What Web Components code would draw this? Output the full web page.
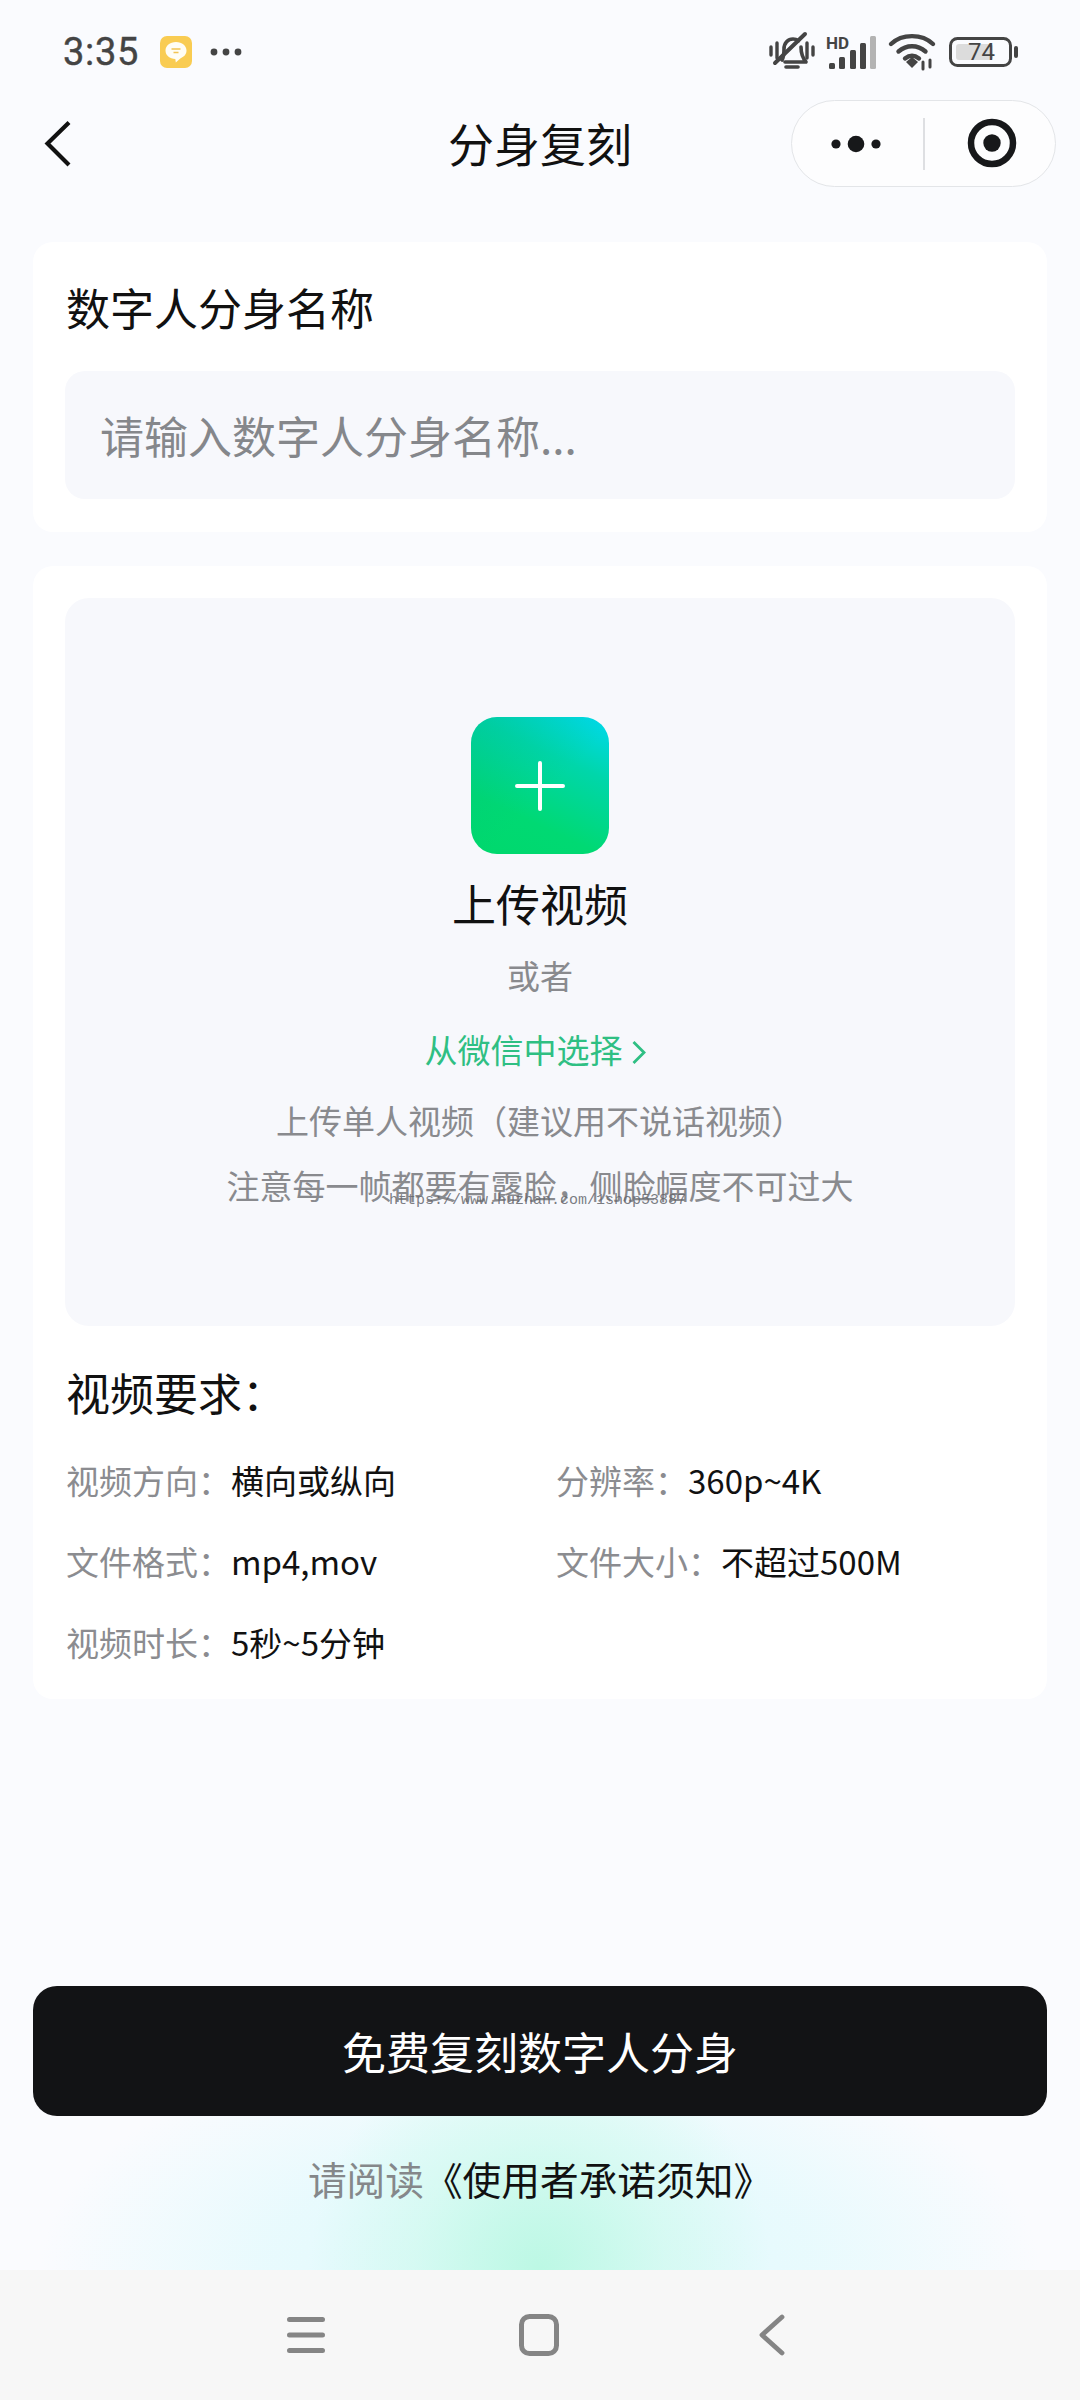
<!DOCTYPE html>
<html lang="zh-CN">
<head>
<meta charset="utf-8">
<title>分身复刻</title>
<style>
html,body{margin:0;padding:0;background:#fafbfe}
body{font-family:"Noto Sans CJK SC","Noto Sans",sans-serif;color:#111}
</style>
</head>
<body>
<app-shell>
  <status-bar slot="top"></status-bar>
  <title-bar slot="top" heading="分身复刻"></title-bar>
  <info-card style="--pad:32px;--h:290px;--top:0px">
    <section-title style="--mb:32px;--lh:64px;--mt:1px">数字人分身名称</section-title>
    <name-field placeholder="请输入数字人分身名称..."></name-field>
  </info-card>
  <info-card style="--pad:32px;--h:1133px;--top:34px">
    <upload-zone></upload-zone>
    <section-title style="--mt:34px;--mb:15px;--lh:64px">视频要求：</section-title>
    <req-grid>
      <req-item label="视频方向：" value="横向或纵向"></req-item>
      <req-item label="分辨率：" value="360p~4K"></req-item>
      <req-item label="文件格式：" value="mp4,mov"></req-item>
      <req-item label="文件大小：" value="不超过500M"></req-item>
      <req-item label="视频时长：" value="5秒~5分钟"></req-item>
    </req-grid>
  </info-card>
  <action-footer slot="bottom"></action-footer>
  <sys-nav slot="bottom"></sys-nav>
</app-shell>
<script>
function def(name, html, init){
  customElements.define(name, class extends HTMLElement{
    constructor(){super();this.attachShadow({mode:"open"});}
    connectedCallback(){
      let h = html;
      for(const a of this.getAttributeNames()) h = h.split("{{"+a+"}}").join(this.getAttribute(a));
      this.shadowRoot.innerHTML = h;
    }
  });
}
const FONT = '"Noto Sans CJK SC","Noto Sans",sans-serif';
def("app-shell",`<style>
:host{display:flex;flex-direction:column;width:1080px;height:2400px;overflow:hidden;background:#fafbfe;font-family:${FONT}}
.main{flex:1;display:flex;flex-direction:column;padding:0 33px}
</style>
<slot name="top"></slot>
<div class="main"><slot></slot></div>
<slot name="bottom"></slot>`);

def("status-bar",`<style>
:host{display:flex;align-items:center;height:100px;box-sizing:border-box;padding:4px 0 0 63px;position:relative;color:#444}
.t{font:400 38px/1 Roboto,sans-serif;letter-spacing:.7px;width:76px;-webkit-text-stroke:.4px #444}
.n{margin-left:21px;width:32px;height:32px;display:block}
.d{margin-left:18px;display:block}
.r{margin-left:auto;margin-right:61px;display:flex;align-items:center}
svg{display:block;overflow:visible}
.b{position:relative;width:70px;height:30px;margin-left:14px}
.b b{position:absolute;left:13px;top:0;width:50px;height:30px;font:400 24px/30px Roboto,sans-serif;text-align:left;padding-left:6px;box-sizing:border-box;color:#444}
</style>
<span class="t">3:35</span>
<svg class="n" viewBox="0 0 32 32"><rect width="32" height="32" rx="7" fill="#f9cc52"/><path d="M16 6c6.200 0 10.500 3.700 10.500 8.600 0 3.800-2.600 6.600-6.200 7.800l-4.500 4.100-.5-3.500C9.700 23 5.500 19.500 5.500 14.600 5.500 9.700 9.800 6 16 6z" fill="#fffdf4"/><path d="M11.500 13h9M13.500 16.500h5" stroke="#f2c451" stroke-width="1.600"/></svg>
<svg class="d" width="32" height="8" viewBox="0 0 32 8"><circle cx="4" cy="4" r="3.400" fill="#444"/><circle cx="16" cy="4" r="3.400" fill="#444"/><circle cx="28" cy="4" r="3.400" fill="#444"/></svg>
<div class="r">
<svg width="46" height="40" viewBox="0 0 46 40" fill="none" stroke="#444" stroke-linecap="round">
<path d="M2 15v8M8 11v15M38 11v15M44 15v8" stroke-width="3.400"/>
<path d="M13 28c2-3 2-7 2-11 0-6 4-10 9-10 2 0 4 .7 5.500 1.800M32 15c0 4 0 9 5 15H16" stroke-width="3.600" stroke-linejoin="round"/>
<path d="M36 2 6 31" stroke-width="4"/>
<path d="M17 35h12" stroke-width="3.600"/></svg>
<svg style="margin-left:11px" width="50" height="35" viewBox="0 0 50 35"><text x="0" y="14" font-family="Roboto,sans-serif" font-weight="700" font-size="17" fill="#444">HD</text>
<rect x="3" y="28" width="6" height="6" rx="1.500" fill="#444"/><rect x="13" y="22" width="6" height="12" rx="1.500" fill="#444"/><rect x="24" y="15" width="6" height="19" rx="1.500" fill="#444"/><rect x="34" y="8" width="6" height="26" rx="1.500" fill="#444"/><rect x="44" y="1" width="6" height="33" rx="1.500" fill="#b3b3b3"/></svg>
<svg style="margin-left:13px" width="46" height="36" viewBox="0 0 46 36" fill="none" stroke="#444" stroke-width="4.400" stroke-linecap="round"><path d="M2 10C13-.5 33-.5 44 10M9.500 17.500c8-7 19-7 27 0M16 24.500c4.500-3.500 9.500-3.500 14 0"/><path d="M17 28l6-5 6 5-6 6z" fill="#444" stroke="none"/><path d="M34 28v7M41 26v7" stroke-width="3"/></svg>
<div class="b"><svg width="70" height="30" viewBox="0 0 70 30" fill="none"><rect x="1.500" y="1.500" width="60" height="27" rx="7" stroke="#444" stroke-width="3"/><rect x="7" y="7" width="37" height="16" rx="3" fill="#dcdcdc"/><rect x="65" y="9" width="4" height="12" rx="2" fill="#444"/></svg><b>74</b></div>
</div>`);

def("title-bar",`<style>
:host{display:flex;align-items:center;justify-content:center;height:142px;position:relative;box-sizing:border-box;padding-bottom:58px}
h1{margin:0;font:400 46px/60px ${FONT};color:#111}
.back{position:absolute;left:44px;top:20px}
.pill{position:absolute;left:791px;top:0;width:265px;height:87px;box-sizing:border-box;border:1.500px solid #e3e5e8;border-radius:44px;background:#fdfdfe;display:flex;align-items:center}
.pill i{position:absolute;left:131px;top:17px;width:1.500px;height:52px;background:#dedfe2}
.pill .m{position:absolute;left:37px;top:33px}
.pill .o{position:absolute;left:175px;top:17px}
</style>
<svg class="back" width="28" height="48" viewBox="0 0 28 48" fill="none"><path d="M25 2.500 3.500 23.500 25 45" stroke="#111" stroke-width="4.200"/></svg>
<h1>{{heading}}</h1>
<div class="pill"><svg class="m" width="54" height="20" viewBox="0 0 54 20"><circle cx="7" cy="10" r="4.600" fill="#17181a"/><circle cx="27" cy="10" r="8.300" fill="#17181a"/><circle cx="47" cy="10" r="4.600" fill="#17181a"/></svg><i></i>
<svg class="o" width="50" height="50" viewBox="0 0 50 50"><circle cx="25" cy="25" r="21" fill="none" stroke="#17181a" stroke-width="6.500"/><circle cx="25" cy="25" r="8.700" fill="#17181a"/></svg></div>`);

def("info-card",`<style>
:host{display:block;box-sizing:border-box;height:var(--h);margin-top:var(--top);padding:var(--pad);background:#fff;border-radius:20px}
</style><slot></slot>`);

def("section-title",`<style>
:host{display:block;font:400 44px/var(--lh) ${FONT};color:#111;margin-top:var(--mt,0);margin-bottom:var(--mb,0);margin-left:1px;white-space:nowrap}
</style><slot></slot>`);

def("name-field",`<style>
:host{display:block;height:128px;box-sizing:border-box;padding:0 35px;background:#f7f8fc;border-radius:20px;font:400 44px/128px ${FONT};color:#85878b;white-space:nowrap}
</style>{{placeholder}}`);

def("upload-zone",`<style>
:host{display:flex;flex-direction:column;align-items:center;height:728px;box-sizing:border-box;padding-top:119px;background:#f7f8fc;border-radius:24px;position:relative;color:#898a8e}
.tile{width:138px;height:137px;border-radius:26px;background:linear-gradient(205deg,#00d9f0 0%,#00d6aa 32%,#00d973 70%,#00d86c 100%);position:relative;display:flex;align-items:center;justify-content:center}
.tile::before{content:"";position:absolute;inset:0;border-radius:26px;background:linear-gradient(135deg,rgba(0,180,130,.3),rgba(0,180,130,0) 55%)}
.tile svg{position:relative}
.h{font:400 44px/60px ${FONT};color:#111;margin-top:19px}
.or{font:400 33px/46px ${FONT};margin-top:19px}
.g{font:400 33px/46px ${FONT};color:#2fbf83;margin-top:28px;display:flex;align-items:center;margin-right:9px}
.g svg{margin-left:8px;margin-top:6px}
.l{font:400 33px/46px ${FONT};white-space:nowrap}
.l1{margin-top:25px}.l2{margin-top:19px}
.wm{position:absolute;left:324px;top:593px;font:400 15px/20px "Liberation Mono",monospace;color:rgba(100,102,108,.85);white-space:nowrap}
</style>
<div class="tile"><svg width="50" height="50" viewBox="0 0 50 50"><path d="M25 2v46M2 25h46" stroke="#fff" stroke-width="4" stroke-linecap="round"/></svg></div>
<div class="h">上传视频</div>
<div class="or">或者</div>
<div class="g">从微信中选择<svg width="16" height="26" viewBox="0 0 16 26" fill="none"><path d="M2.500 3 13 13.500 2.500 24" stroke="#2fbf83" stroke-width="2.800"/></svg></div>
<div class="l l1">上传单人视频（建议用不说话视频）</div>
<div class="l l2">注意每一帧都要有露脸，侧脸幅度不可过大</div>
<div class="wm">https://www.huzhan.com/1shop53887</div>`);

def("req-grid",`<style>
:host{display:grid;grid-template-columns:490px 1fr;grid-auto-rows:81px;margin-left:1px}
</style><slot></slot>`);

def("req-item",`<style>
:host{display:flex;align-items:center;font:400 33px/46px ${FONT};white-space:nowrap;height:81px}
.a{color:#8b8c90}.b{color:#111}
</style><span class="a">{{label}}</span><span class="b">{{value}}</span>`);

def("action-footer",`<style>
:host{display:block;height:284px;box-sizing:border-box;padding:0 33px;margin-top:0;
 background:
 radial-gradient(ellipse 230px 240px at 50% 100%,rgba(188,248,228,1),rgba(205,250,236,.6) 55%,rgba(220,252,245,0) 100%),
 radial-gradient(ellipse 500px 240px at 50% 100%,rgba(222,249,252,1),rgba(228,250,253,.8) 55%,rgba(240,252,254,0) 100%);
}
.btn{height:130px;background:#121315;border-radius:24px;color:#fff;font:400 44px/130px ${FONT};text-align:center}
.f{font:400 38.700px/56px ${FONT};text-align:center;margin-top:34px;color:#111}
.f span{color:#85888a}
</style>
<div class="btn">免费复刻数字人分身</div>
<div class="f"><span>请阅读</span>《使用者承诺须知》</div>`);

def("sys-nav",`<style>
:host{display:block;height:130px;background:#f7f7f7;position:relative}
svg{position:absolute;display:block}
</style>
<svg style="left:287px;top:45px" width="38" height="40" viewBox="0 0 38 40"><path d="M2.500 4.500h33M2.500 20h33M2.500 35.500h33" stroke="#858585" stroke-width="5" stroke-linecap="round"/></svg>
<svg style="left:519px;top:44px" width="40" height="42" viewBox="0 0 40 42"><rect x="2.500" y="2.500" width="35" height="37" rx="8" fill="none" stroke="#858585" stroke-width="5"/></svg>
<svg style="left:758px;top:44px" width="28" height="42" viewBox="0 0 28 42"><path d="M24 3 4 21l20 18" fill="none" stroke="#858585" stroke-width="4.800" stroke-linecap="round" stroke-linejoin="round"/></svg>`);
</script>
</body>
</html>
